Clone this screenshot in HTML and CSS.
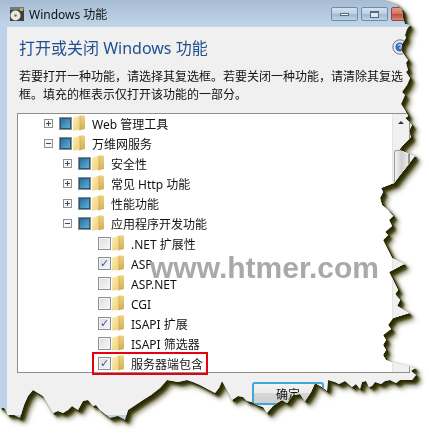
FILE: index.html
```html
<!DOCTYPE html>
<html lang="zh">
<head>
<meta charset="utf-8">
<title>Windows 功能</title>
<link rel="stylesheet" href="styles.css">
</head>
<body>
<svg class="defs" width="0" height="0" aria-hidden="true">
  <defs>
    <linearGradient id="fb" x1="0" y1="0" x2="0" y2="1"><stop offset="0" stop-color="#eed27e"/><stop offset="1" stop-color="#d2ad55"/></linearGradient>
    <linearGradient id="ff" x1="0" y1="0" x2="1" y2="1"><stop offset="0" stop-color="#fbeeb4"/><stop offset="1" stop-color="#ecce78"/></linearGradient>
    <symbol id="folder" viewBox="0 0 12 16">
      <path d="M5 1.5 L7 0.5 H11 Q12 0.5 12 2 V14 L6 15.5 Z" fill="url(#fb)"/>
      <path d="M0 2.5 L7 1 V14.6 L0 15.8 Z" fill="url(#ff)"/>
      <path d="M7 1 V14.6" stroke="#c9a650" stroke-width="0.6" fill="none"/>
    </symbol>
    <symbol id="plus" viewBox="0 0 9 9"><rect x=".5" y=".5" width="8" height="8" fill="#f6f6f6" stroke="#919191"/><path d="M2 4.5H7M4.5 2V7" stroke="#3a4a5a"/></symbol>
    <symbol id="minus" viewBox="0 0 9 9"><rect x=".5" y=".5" width="8" height="8" fill="#f6f6f6" stroke="#919191"/><path d="M2 4.5H7" stroke="#3a4a5a"/></symbol>
  </defs>
</svg>
<div class="torn-shadow">
  <div class="window">
    <header class="titlebar">
      <svg class="app-icon" viewBox="0 0 16 16" width="16" height="16">
        <rect x="1" y="1" width="14" height="3" fill="#6f7a80"/>
        <rect x="1" y="4" width="14" height="11" fill="#3b4248"/>
        <rect x="11" y="2" width="3" height="3" fill="#d8a84a"/>
        <circle cx="6.5" cy="9.5" r="5" fill="#ece8d8"/>
        <circle cx="6.5" cy="9.5" r="1.3" fill="#6a7480"/>
      </svg>
      <span class="title">Windows 功能</span>
      <div class="caption-buttons">
        <span class="cap cap-min"><i class="min-glyph"></i></span>
        <span class="cap cap-max"><i class="max-glyph"></i></span>
        <span class="cap cap-close"></span>
      </div>
    </header>
    <main class="panel">
      <div class="head-row">
        <h1 class="heading">打开或关闭 Windows 功能</h1>
        <svg class="help" viewBox="0 0 16 16" width="16" height="16">
          <circle cx="8" cy="8" r="7.2" fill="#e6eaf0" stroke="#6d7480"/>
          <circle cx="8" cy="8" r="4.6" fill="#3a6cc0"/>
          <path d="M6 6.5 Q8 4.5 10 6.5 L8 8.5 V10" stroke="#fff" fill="none"/>
        </svg>
      </div>
      <p class="intro">若要打开一种功能，请选择其复选框。若要关闭一种功能，请清除其复选框。填充的框表示仅打开该功能的一部分。</p>
      <div class="tree">
        <ul class="rows">
          <li class="row l0"><svg class="exp"><use href="#plus"/></svg><span class="box part"></span><svg class="fold"><use href="#folder"/></svg><span class="label">Web 管理工具</span></li>
          <li class="row l0"><svg class="exp"><use href="#minus"/></svg><span class="box part"></span><svg class="fold"><use href="#folder"/></svg><span class="label">万维网服务</span></li>
          <li class="row l1"><svg class="exp"><use href="#plus"/></svg><span class="box part"></span><svg class="fold"><use href="#folder"/></svg><span class="label">安全性</span></li>
          <li class="row l1"><svg class="exp"><use href="#plus"/></svg><span class="box part"></span><svg class="fold"><use href="#folder"/></svg><span class="label">常见 Http 功能</span></li>
          <li class="row l1"><svg class="exp"><use href="#plus"/></svg><span class="box part"></span><svg class="fold"><use href="#folder"/></svg><span class="label">性能功能</span></li>
          <li class="row l1"><svg class="exp"><use href="#minus"/></svg><span class="box part"></span><svg class="fold"><use href="#folder"/></svg><span class="label">应用程序开发功能</span></li>
          <li class="row l2"><span class="box"></span><svg class="fold"><use href="#folder"/></svg><span class="label">.NET 扩展性</span></li>
          <li class="row l2"><span class="box on">✓</span><svg class="fold"><use href="#folder"/></svg><span class="label">ASP</span></li>
          <li class="row l2"><span class="box"></span><svg class="fold"><use href="#folder"/></svg><span class="label">ASP.NET</span></li>
          <li class="row l2"><span class="box"></span><svg class="fold"><use href="#folder"/></svg><span class="label">CGI</span></li>
          <li class="row l2"><span class="box on">✓</span><svg class="fold"><use href="#folder"/></svg><span class="label">ISAPI 扩展</span></li>
          <li class="row l2"><span class="box"></span><svg class="fold"><use href="#folder"/></svg><span class="label">ISAPI 筛选器</span></li>
          <li class="row l2"><span class="box on">✓</span><svg class="fold"><use href="#folder"/></svg><span class="label">服务器端包含</span></li>
        </ul>
        <div class="scrollbar">
          <span class="arrow"></span>
          <span class="thumb"></span>
        </div>
      </div>
      <div class="footer">
        <button class="ok" type="button">确定</button>
      </div>
    </main>
    <div class="watermark">www.htmer.com</div>
    <div class="highlight"></div>
  </div>
</div>
</body>
</html>
```
FILE: styles.css
```css
* { box-sizing: border-box; }
html, body { margin: 0; padding: 0; background: #fff; }
body {
  width: 429px;
  height: 433px;
  overflow: hidden;
  font-family: "Noto Sans", "Noto Sans CJK SC", sans-serif;
  font-size: 12px;
  color: #111;
}
.defs { position: absolute; }
.torn-shadow {
  width: 429px;
  height: 433px;
  filter: drop-shadow(2px 2px 0 #2a2a04) drop-shadow(2px 2px 1px #3a3a0c) drop-shadow(2px 2px 2px #8a8a6c);
}
.window {
  position: relative;
  width: 429px;
  height: 433px;
  background: #bcd2e8;
  clip-path: polygon(
    0 0, 385px 0, 396px 4px, 402px 10px, 403px 18px, 405px 24px, 410px 25px, 407px 29px, 405px 35px, 406px 38px, 402px 44px, 401px 50px, 405px 56px, 408px 60px, 406px 63px, 408px 70px, 406px 72px, 410px 78px, 407px 85px, 402px 92px, 405px 95px, 401px 104px,
    405px 110px, 408px 116px, 405px 118px, 412px 125px, 409px 131px, 411px 137px, 403px 145px, 399px 150px, 415px 156px, 408px 165px, 400px 175px, 394px 183px, 381px 188px, 383px 192px, 380px 198px, 382px 205px, 388px 210px, 393px 216px, 389px 220px, 392px 226px, 385px 232px, 388px 235px, 383px 240px, 388px 250px, 392px 258px, 404px 264px, 389px 272px, 393px 280px, 398px 290px, 395px 294px, 400px 300px, 397px 306px, 409px 313px, 393px 318px, 388px 325px, 391px 329px, 383px 335px, 386px 340px, 383px 345px, 386px 350px, 383px 355px, 386px 360px, 391px 362px, 415px 368px, 411px 371px, 416px 375px, 412px 380px,
    400px 380px, 396px 383px, 390px 380px, 385px 381px, 381px 384px, 375px 382px, 372px 386px, 369px 387px, 366px 381px, 362px 382px, 360px 389px, 356px 384px, 352px 387px, 345px 381px, 339px 384px, 335px 382px, 328px 380px, 327px 391px, 322px 387px, 315px 383px, 311px 392px, 305px 401px, 300px 394px, 293px 395px, 287px 403px, 282px 400px, 277px 403px, 273px 406px, 267px 413px, 263px 407px, 257px 405px, 252px 402px, 247px 401px, 243px 397px, 238px 396px, 232px 400px, 227px 390px, 222px 381px, 219px 388px, 215px 393px, 200px 385px, 193px 382px, 187px 380px, 178px 382px, 167px 380px, 160px 388px, 151px 395px, 143px 400px, 128px 410px, 125px 420px, 118px 416px, 110px 418px, 100px 410px, 96px 405px, 93px 406px, 88px 400px, 83px 401px, 78px 410px, 72px 406px, 68px 410px, 63px 413px, 58px 411px, 53px 413px, 43px 396px, 33px 390px, 28px 396px, 24px 405px, 20px 418px, 14px 415px, 8px 415px, 4px 408px, 0 408px
  );
}
.titlebar {
  display: flex;
  align-items: center;
  height: 27px;
  padding: 1px 0 0 9px;
  background: linear-gradient(#a7bcd2, #c2d6ea);
}
.app-icon { flex: none; }
.title { margin-left: 4px; font-size: 12px; color: #111; }
.caption-buttons { display: flex; gap: 3px; margin-left: auto; padding-right: 11px; }
.cap {
  display: flex;
  align-items: center;
  justify-content: center;
  height: 14px;
  width: 27px;
  border: 1px solid #6f8dab;
  border-radius: 2px;
  background: linear-gradient(#d3e2f0 0, #bacfe3 50%, #9fb9d2 51%, #bcd3e6 100%);
}
.cap-close { background: linear-gradient(#e09a8c 0, #d4705e 50%, #bf4a38 51%, #d68a78 100%); border-color: #8a4a44; }
.min-glyph { width: 9px; height: 3px; background: #fff; border: 1px solid #56687c; }
.max-glyph { width: 9px; height: 7px; border: 1px solid #56687c; background: #dfe8f1; box-shadow: inset 0 1px 0 #56687c; }
.panel {
  margin-left: 7px;
  height: 388px;
  padding: 0 0 0 10px;
  background: #f0f0f0;
}
.head-row { display: flex; align-items: center; height: 41px; padding: 0 5px 2px 2px; }
.heading { margin: 0; font-size: 16px; font-weight: 400; color: #1f4f8f; white-space: nowrap; }
.help { margin-left: auto; margin-right: 16px; }
.intro {
  margin: 0;
  width: 390px;
  padding-left: 2px;
  font-size: 12px;
  line-height: 18px;
  height: 45px;
  color: #111;
}
.tree {
  display: flex;
  width: 393px;
  height: 260px;
  background: #fff;
  border: 1px solid #8e8f8f;
}
.rows {
  flex: 1;
  margin: 0;
  padding: 0;
  list-style: none;
  min-width: 0;
}
.row {
  display: flex;
  align-items: center;
  height: 20px;
  padding-bottom: 2px;
  white-space: nowrap;
  font-size: 12px;
}
.row.l0 { padding-left: 26px; }
.row.l1 { padding-left: 45px; }
.row.l2 { padding-left: 80px; }
.label { padding-top: 2px; }
.exp { width: 9px; height: 9px; flex: none; margin-right: 6px; }
.box {
  flex: none;
  display: flex;
  align-items: center;
  justify-content: center;
  width: 13px;
  height: 13px;
  border: 1px solid #8e8f8f;
  background: linear-gradient(135deg, #dcdcdc, #f8f8f8);
  box-shadow: inset 0 0 0 1px #f4f4f4;
  color: #3a5a9c;
  font-family: "DejaVu Sans", sans-serif;
  font-weight: 700;
  font-size: 11px;
  line-height: 1;
}
.box.part { background: #f4f4f4; }
.box.part::after {
  content: "";
  width: 9px;
  height: 9px;
  background: linear-gradient(135deg, #2a6f9e, #5fb0d8);
  border: 1px solid #26587f;
}
.fold { flex: none; width: 12px; height: 16px; margin-left: 1px; margin-right: 7px; }
.scrollbar {
  position: relative;
  flex: none;
  width: 17px;
  background: #f0f0f0;
  border-left: 1px solid #e4e4e4;
}
.arrow {
  position: absolute;
  left: 5px;
  top: 7px;
  border-left: 3px solid transparent;
  border-right: 3px solid transparent;
  border-bottom: 3px solid #333;
}
.thumb {
  position: absolute;
  left: 1px;
  top: 36px;
  width: 15px;
  height: 36px;
  border: 1px solid #999;
  border-radius: 2px;
  background: linear-gradient(90deg, #f4f4f4, #cfcfcf 50%, #e8e8e8);
}
.footer { display: flex; padding: 9px 0 0 235px; }
.ok {
  width: 72px;
  height: 23px;
  padding: 0;
  font-family: inherit;
  font-size: 12px;
  color: #111;
  border: 2px solid #3fa6d8;
  border-radius: 3px;
  background: linear-gradient(#f2f2f2 0, #ebebeb 49%, #d6d6d6 50%, #cfcfcf 100%);
}
.watermark {
  position: absolute;
  left: 150px;
  top: 249px;
  font-family: "Liberation Sans", sans-serif;
  font-weight: 700;
  font-size: 30px;
  line-height: 38px;
  color: #a9a9a9;
  white-space: nowrap;
}
.highlight {
  position: absolute;
  left: 92px;
  top: 352px;
  width: 116px;
  height: 23px;
  border: 2px solid #e8000e;
}
```
